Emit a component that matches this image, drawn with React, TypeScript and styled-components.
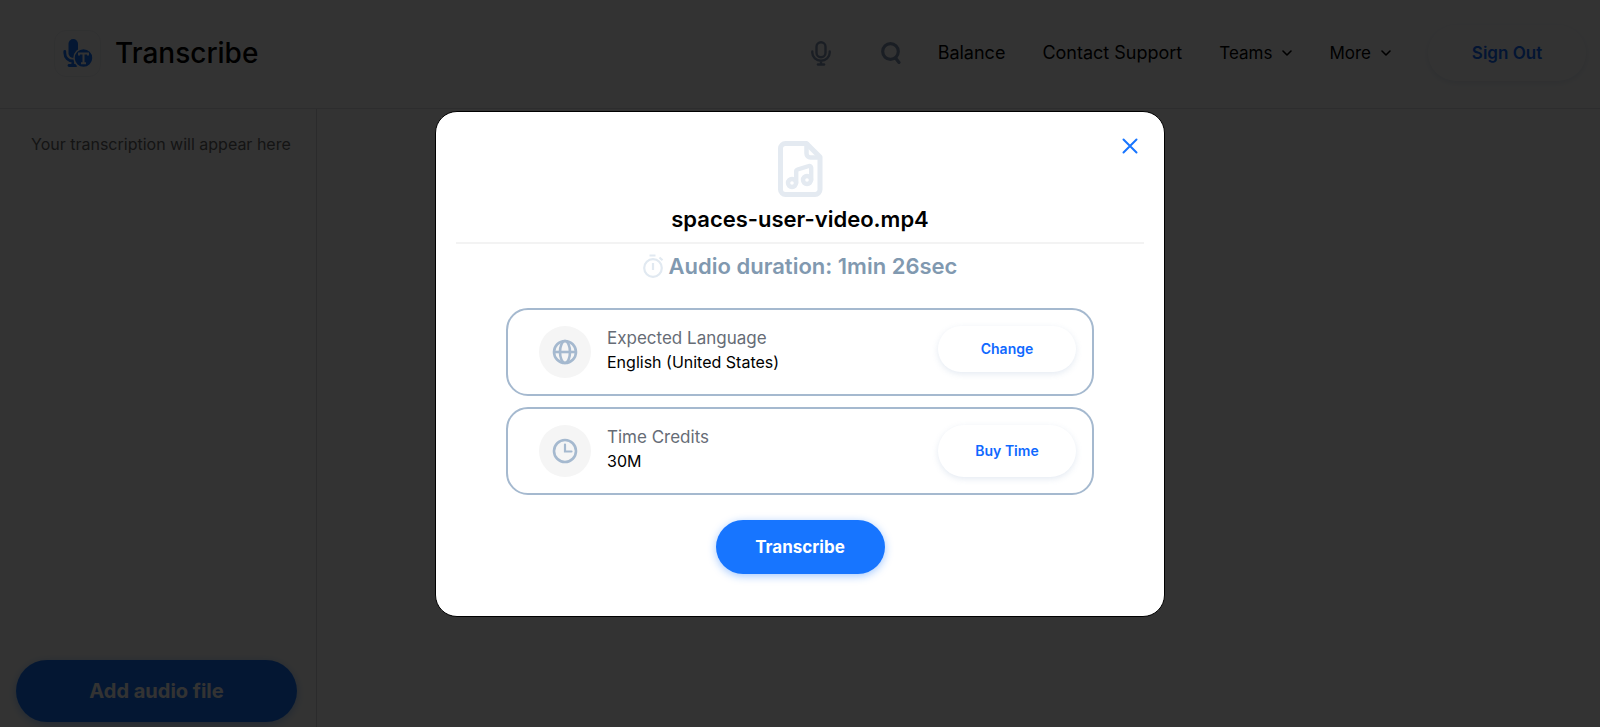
import React from "react";
import styled, { createGlobalStyle } from "styled-components";

const blue = "#1775ff";
const steel = "#a5b9cf";

const GlobalStyle = createGlobalStyle`
  *, *::before, *::after { box-sizing: border-box; }
  html, body { margin: 0; }
  body {
    background: #fff;
    color: #000;
    font-family: Inter, "Liberation Sans", sans-serif;
    font-size: 16px;
  }
  button { font-family: inherit; cursor: pointer; }
  h1, h2, p, dl, dd, dt { margin: 0; font-weight: inherit; }
  svg { display: block; flex: none; }
`;

const Page = styled.div`
  display: flex;
  flex-direction: column;
  min-height: 100vh;
`;

const Header = styled.header`
  display: flex;
  align-items: center;
  justify-content: space-between;
  min-height: 109px;
  padding: 0 14px 2px 54px;
  border-bottom: 1px solid #e0e2e6;
`;

const Brand = styled.a`
  display: flex;
  align-items: center;
  gap: 14px;
  color: #000;
  text-decoration: none;
`;

const LogoTile = styled.span`
  display: grid;
  place-items: center;
  width: 47px;
  height: 47px;
  border: 1px solid #f1f2f5;
  border-radius: 12px;
`;

const BrandName = styled.h1`
  font-size: 28px;
  line-height: 36px;
  font-weight: 500;
`;

const Nav = styled.nav`
  display: flex;
  align-items: center;
  gap: 37px;
`;

const Tools = styled.div`
  display: flex;
  align-items: center;
  gap: 50px;
`;

const IconButton = styled.button`
  display: grid;
  place-items: center;
  padding: 0;
  border: 0;
  background: none;
  color: ${(p) => p.color || blue};
`;

const NavLink = styled.a`
  color: #000;
  font-size: 18px;
  line-height: 24px;
  text-decoration: none;
`;

const MenuButton = styled.button`
  display: flex;
  align-items: center;
  gap: 10px;
  padding: 0;
  border: 0;
  background: none;
  color: #000;
  font-size: 17px;
  line-height: 24px;
`;

const PillButton = styled.button<{ $size: "small" | "medium" | "tall" | "large" | "wide"; $solid?: boolean }>`
  flex: none;
  border: 0;
  border-radius: 32px;
  padding: 0;
  font-weight: ${(p) => (p.$solid ? 700 : 600)};
  color: ${(p) => (p.$solid ? "#fff" : "#0f69ff")};
  background: ${(p) => (p.$solid ? blue : "#fff")};
  box-shadow: ${(p) =>
    p.$solid ? "0 2px 8px rgba(23, 117, 255, 0.4)" : "0 2px 6px rgba(120, 150, 190, 0.2)"};
  width: ${(p) => ({ small: "138px", tall: "138px", medium: "158px", large: "169px", wide: "100%" })[p.$size]};
  height: ${(p) => ({ small: "46px", tall: "52px", medium: "56px", large: "54px", wide: "62px" })[p.$size]};
  font-size: ${(p) => ({ small: "14px", tall: "14px", medium: "17px", large: "17px", wide: "20px" })[p.$size]};
`;

const Body = styled.div`
  display: flex;
  flex: 1;
`;

const Sidebar = styled.aside`
  display: flex;
  flex-direction: column;
  justify-content: space-between;
  width: 317px;
  padding: 23px 19px 5px 16px;
  border-right: 1px solid #d4d6da;
`;

const EmptyNote = styled.p`
  padding-left: 15px;
  color: #666;
  font-size: 16px;
  line-height: 24px;
  white-space: nowrap;
`;

const Main = styled.main`
  flex: 1;
`;

const Overlay = styled.div`
  position: fixed;
  inset: 0;
  display: flex;
  align-items: center;
  justify-content: center;
  background: rgba(0, 0, 0, 0.8);
`;

const Dialog = styled.section`
  position: relative;
  width: min(730px, 94vw);
  padding: 29px 20px 42px;
  border: 1px solid #000;
  border-radius: 22px;
  background: #fff;
`;

const CloseSpot = styled.div`
  position: absolute;
  top: 26px;
  right: 26px;
`;

const FileHead = styled.div`
  display: flex;
  flex-direction: column;
  align-items: center;
  gap: 7px;
  padding-bottom: 8px;
  border-bottom: 2px solid #f3f3f3;
`;

const FileName = styled.h2`
  font-size: 22px;
  line-height: 30px;
  font-weight: 600;
`;

const Duration = styled.p`
  display: flex;
  align-items: center;
  justify-content: center;
  gap: 5px;
  padding: 7px 0 27px;
  color: #8199b0;
  font-size: 22px;
  line-height: 30px;
  font-weight: 600;
`;

const Cards = styled.div`
  display: flex;
  flex-direction: column;
  gap: 11px;
  margin: 0 50px;
`;

const Card = styled.div`
  display: flex;
  align-items: flex-start;
  min-height: 88px;
  padding: 16px 16px 16px 31px;
  border: 2px solid ${steel};
  border-radius: 22px;
`;

const RoundIcon = styled.span`
  display: grid;
  place-items: center;
  width: 52px;
  height: 52px;
  border-radius: 50%;
  background: #f5f5f5;
`;

const Fact = styled.dl`
  flex: 1;
  padding-left: 16px;
  line-height: 24px;
`;

const FactLabel = styled.dt`
  color: #666c76;
  font-size: 17px;
`;

const FactValue = styled.dd`
  font-size: 16px;
`;

const Actions = styled.div`
  display: flex;
  justify-content: center;
  padding-top: 25px;
`;

const LogoMark = () => (
  <svg width="30" height="29" viewBox="0 0 30 29" aria-hidden="true">
    <rect x="5.500" y="0" width="9.500" height="19" rx="4.700" fill={blue} />
    <path d="M1.800 12.500v1.500a8 8 0 0 0 8 8V26" fill="none" stroke={blue} strokeWidth="2.800" strokeLinecap="round" />
    <path d="M6 26.500h7" stroke={blue} strokeWidth="2.800" strokeLinecap="round" />
    <circle cx="20.500" cy="19" r="9.500" fill={blue} stroke="#fff" strokeWidth="1.500" />
    <path d="M16 16.500v-2h9v2M20.500 14v10M18 24.200h5" fill="none" stroke="#fff" strokeWidth="2" />
  </svg>
);

const MicIcon = () => (
  <svg width="20" height="25" viewBox="0 0 20 25" fill="none" stroke="currentColor" strokeLinecap="round" aria-hidden="true">
    <rect x="5.500" y="1.200" width="9" height="15" rx="4.500" strokeWidth="2.400" />
    <path d="M1.300 10.500v1.200a8.700 8 0 0 0 17.400 0v-1.200M10 20v3" strokeWidth="2.400" />
    <path d="M7 23.500h6" strokeWidth="2.600" />
  </svg>
);

const SearchIcon = () => (
  <svg width="20" height="22" viewBox="0 0 20 22" fill="none" stroke="currentColor" aria-hidden="true">
    <circle cx="9.500" cy="9.500" r="7.800" strokeWidth="3.200" />
    <path d="M14.500 16l3.500 4.500" strokeWidth="3.200" strokeLinecap="round" />
  </svg>
);

const Chevron = () => (
  <svg width="10" height="6" viewBox="0 0 10 6" fill="none" stroke="currentColor" strokeWidth="1.600" strokeLinecap="round" strokeLinejoin="round" aria-hidden="true">
    <path d="M1 1l4 4 4-4" />
  </svg>
);

const CloseIcon = () => (
  <svg width="16" height="16" viewBox="0 0 16 16" stroke="currentColor" strokeWidth="2" strokeLinecap="round" aria-hidden="true">
    <path d="M1.500 1.500l13 13M14.500 1.500l-13 13" />
  </svg>
);

const AudioFileIcon = () => (
  <svg width="45" height="56" viewBox="0 0 45 56" fill="none" stroke="#e4eaf1" strokeLinecap="round" strokeLinejoin="round" aria-hidden="true">
    <path d="M28.500 2.500H7.500a5 5 0 0 0-5 5v41a5 5 0 0 0 5 5h29.500a5 5 0 0 0 5-5V16z" strokeWidth="5" />
    <path d="M28.500 3v9.500a4 4 0 0 0 4 4h9" strokeWidth="4.500" />
    <circle cx="14" cy="42" r="4" strokeWidth="4.400" />
    <circle cx="29" cy="39" r="4" strokeWidth="4.400" />
    <path d="M18.200 42V30.500a2 2 0 0 1 1.400-2l11.200-3.500a1.800 1.800 0 0 1 2.400 1.700V39" strokeWidth="4.400" />
  </svg>
);

const StopwatchIcon = () => (
  <svg width="21" height="24" viewBox="0 0 21 24" fill="none" stroke="#e1e9f1" strokeWidth="2.200" aria-hidden="true">
    <circle cx="10" cy="14" r="8.800" />
    <path d="M6.500 1.500h6M10 9v7M16.500 3.500l3 2.800" />
  </svg>
);

const GlobeIcon = () => (
  <svg width="26" height="26" viewBox="0 0 26 26" fill="none" stroke={steel} strokeWidth="2.600" aria-hidden="true">
    <circle cx="13" cy="13" r="11" />
    <ellipse cx="13" cy="13" rx="5" ry="11" />
    <path d="M2 13h22" />
  </svg>
);

const ClockIcon = () => (
  <svg width="26" height="26" viewBox="0 0 26 26" fill="none" stroke={steel} strokeWidth="2.600" strokeLinecap="round" aria-hidden="true">
    <circle cx="13" cy="13" r="11" />
    <path d="M13 6.500v7h6.500" strokeWidth="2.200" />
  </svg>
);

export default function App() {
  return (
    <>
      <GlobalStyle />
      <Page>
        <Header>
          <Brand href="#">
            <LogoTile><LogoMark /></LogoTile>
            <BrandName>Transcribe</BrandName>
          </Brand>
          <Nav>
            <Tools>
              <IconButton color="#8496b3" aria-label="Record"><MicIcon /></IconButton>
              <IconButton color="#8496b3" aria-label="Search"><SearchIcon /></IconButton>
            </Tools>
            <NavLink href="#">Balance</NavLink>
            <NavLink href="#">Contact Support</NavLink>
            <MenuButton>Teams <Chevron /></MenuButton>
            <MenuButton>More <Chevron /></MenuButton>
            <PillButton $size="medium">Sign Out</PillButton>
          </Nav>
        </Header>
        <Body>
          <Sidebar>
            <EmptyNote>Your transcription will appear here</EmptyNote>
            <PillButton $size="wide" $solid>Add audio file</PillButton>
          </Sidebar>
          <Main />
        </Body>
      </Page>

      <Overlay>
        <Dialog role="dialog" aria-modal="true" aria-labelledby="file-name">
          <CloseSpot>
            <IconButton aria-label="Close"><CloseIcon /></IconButton>
          </CloseSpot>
          <FileHead>
            <AudioFileIcon />
            <FileName id="file-name">spaces-user-video.mp4</FileName>
          </FileHead>
          <Duration><StopwatchIcon />Audio duration: 1min 26sec</Duration>
          <Cards>
            <Card>
              <RoundIcon><GlobeIcon /></RoundIcon>
              <Fact>
                <FactLabel>Expected Language</FactLabel>
                <FactValue>English (United States)</FactValue>
              </Fact>
              <PillButton $size="small">Change</PillButton>
            </Card>
            <Card>
              <RoundIcon><ClockIcon /></RoundIcon>
              <Fact>
                <FactLabel>Time Credits</FactLabel>
                <FactValue>30M</FactValue>
              </Fact>
              <PillButton $size="tall">Buy Time</PillButton>
            </Card>
          </Cards>
          <Actions>
            <PillButton $size="large" $solid>Transcribe</PillButton>
          </Actions>
        </Dialog>
      </Overlay>
    </>
  );
}
